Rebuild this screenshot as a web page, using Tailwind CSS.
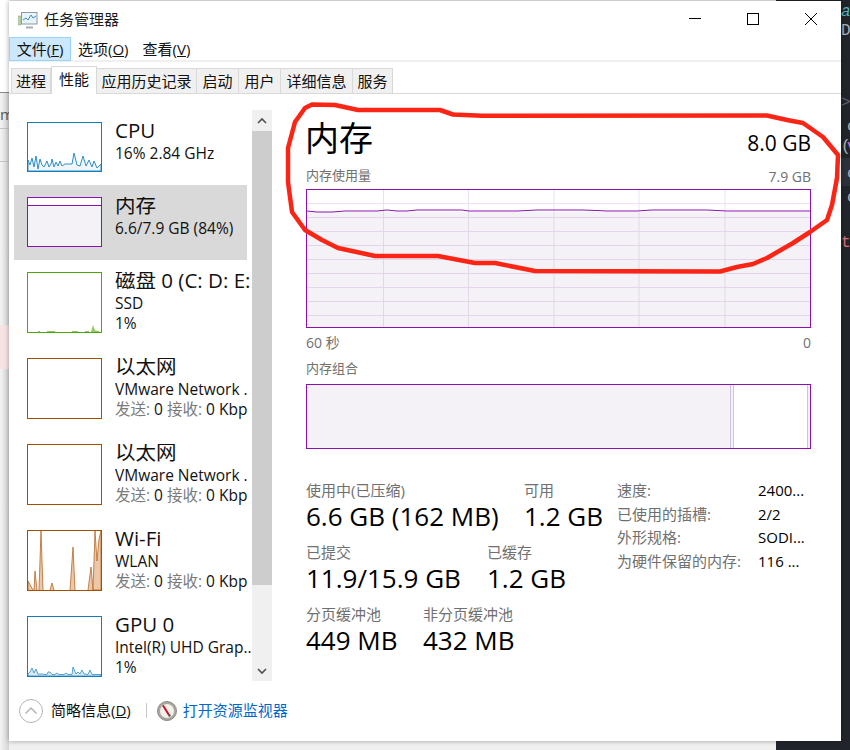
<!DOCTYPE html>
<html lang="zh-CN">
<head>
    <meta charset="UTF-8">
    <title>任务管理器</title>
    <script src="https://cdn.jsdelivr.net/npm/@tailwindcss/browser@4"></script>
</head>
<body class="font-['Open_Sans','Noto_Sans_CJK_SC',sans-serif]">
<div class="relative w-[850px] h-[750px] overflow-hidden bg-[#f0f0f0]">
    <!-- things behind the window -->
    <div class="absolute left-[776px] top-0 w-[74px] h-[750px] bg-[#21252b]"></div>
    <div class="absolute left-0 top-0 w-[9px] h-[750px] bg-gradient-to-r from-[#f4f4f4] to-[#d4d4d4]"></div>
    <div class="absolute left-0 top-0 w-[9px] h-[92px] bg-white"></div>
    <div class="absolute left-0 top-[92px] w-[9px] h-px bg-[#8a8a8a]"></div>
    <div class="absolute left-0 top-[128px] w-[9px] h-px bg-[#c4c4c4]"></div>
    <div class="absolute left-0 top-[161px] w-[9px] h-px bg-[#c4c4c4]"></div>
    <div class="absolute left-0 top-[325px] w-[9px] h-[44px] bg-[#f7e3e3]"></div>
    <div class="absolute left-0 top-[103px] text-[15px] text-[#555]">m</div>
    <div class="absolute left-[841px] top-0 w-[9px] h-[260px] overflow-hidden font-['Liberation_Mono'] text-[16px]">
        <div class="absolute left-0 top-0 italic text-[#56b6c2]">an</div>
        <div class="absolute left-0 top-[19px] text-[#abb2bf]">Do</div>
        <div class="absolute left-0 top-[91px] text-[#5c6370]">&gt;</div>
        <div class="absolute left-[6px] top-[115px] text-[#abb2bf]">c</div>
        <div class="absolute left-0 top-[135px] text-[#abb2bf]">(</div>
        <div class="absolute left-[6px] top-[135px] text-[#c678dd]">v</div>
        <div class="absolute left-0 top-[158px] w-[9px] h-[28px] bg-[#2c313a]"></div>
        <div class="absolute left-[6px] top-[162px] text-[#abb2bf]">c</div>
        <div class="absolute left-[6px] top-[186px] text-[#abb2bf]">c</div>
        <div class="absolute left-0 top-[231px] text-[#e06c75]">t:</div>
    </div>

    <!-- window -->
    <div class="absolute left-[9px] top-px w-[832px] h-[740px] flex flex-col bg-white shadow-[0_0_5px_rgba(0,0,0,0.35)]">
        <div class="h-[37px] flex items-center shrink-0">
            <svg class="ml-[9px] w-[20px] h-[18px]" viewBox="0 0 20 18">
                <rect x="0" y="5" width="3" height="9" fill="#b9d9a8" stroke="#8a9a8a" stroke-width="0.5"/>
                <rect x="3.5" y="1.5" width="15.5" height="11.5" fill="#e8f3fb" stroke="#8f9aa3"/>
                <path d="M5 9l3-2 2 2 3-5 2 3 3-2" fill="none" stroke="#3f8fc4" stroke-width="1"/>
                <path d="M8 16.5h7" stroke="#a6adb3" stroke-width="2"/>
            </svg>
            <span class="ml-[6px] text-[15px] text-[#1a1a1a]">任务管理器</span>
            <div class="ml-auto mr-px -mt-[2px] flex">
                <div class="w-[58px] flex justify-center">
                    <svg class="w-[12px] h-[12px]" viewBox="0 0 12 12"><path d="M0 5.5H12" stroke="#000" stroke-width="1"/></svg>
                </div>
                <div class="w-[58px] flex justify-center">
                    <svg class="w-[12px] h-[12px]" viewBox="0 0 12 12"><rect x="0.5" y="0.5" width="11" height="11" fill="none" stroke="#000"/></svg>
                </div>
                <div class="w-[58px] flex justify-center">
                    <svg class="w-[12px] h-[12px]" viewBox="0 0 12 12"><path d="M0 0L12 12M12 0L0 12" stroke="#000" stroke-width="1"/></svg>
                </div>
            </div>
        </div>
        <div class="h-[24px] flex items-center text-[15px] text-[#111] border-b-2 border-[#f0f0f0] shrink-0">
            <div class="w-[62px] h-[24px] flex items-center justify-center bg-[#cce8ff] border border-[#99d1ff]">文件(<u>F</u>)</div>
            <div class="ml-[7px]">选项(<u>O</u>)</div>
            <div class="ml-[14px]">查看(<u>V</u>)</div>
        </div>
        <div class="h-[32px] flex items-end pl-[2px] border-b border-[#d9d9d9] text-[15px] text-[#111] shrink-0">
            <div class="w-[40px] h-[25px] flex items-center justify-center bg-[#f0f0f0] border border-b-0 border-[#d9d9d9]">进程</div>
            <div class="w-[46px] h-[28px] -mb-px flex items-start pt-[1px] justify-center bg-white border border-b-0 border-[#d9d9d9] z-10">性能</div>
            <div class="w-[100px] h-[25px] flex items-center justify-center bg-[#f0f0f0] border border-l-0 border-b-0 border-[#d9d9d9]">应用历史记录</div>
            <div class="w-[42px] h-[25px] flex items-center justify-center bg-[#f0f0f0] border border-l-0 border-b-0 border-[#d9d9d9]">启动</div>
            <div class="w-[42px] h-[25px] flex items-center justify-center bg-[#f0f0f0] border border-l-0 border-b-0 border-[#d9d9d9]">用户</div>
            <div class="w-[72px] h-[25px] flex items-center justify-center bg-[#f0f0f0] border border-l-0 border-b-0 border-[#d9d9d9]">详细信息</div>
            <div class="w-[40px] h-[25px] flex items-center justify-center bg-[#f0f0f0] border border-l-0 border-b-0 border-[#d9d9d9]">服务</div>
        </div>

        <div class="flex-1 flex min-h-0">
            <!-- left list -->
            <div class="mt-[16px] ml-[5px] w-[238px] h-[571px] overflow-hidden shrink-0 text-[#111]">
                <div class="w-[233px] h-[75px] flex pt-[12px] pl-[13px] gap-[13px]">
                    <svg class="w-[75px] h-[50px] shrink-0 border border-[#117dbb]" viewBox="0 0 73 48">
                        <path d="M0 37L2 42L4 35L6 44L8 33L10 46L12 36L14 42L16 44L19 38L21 44L23 41L24 36L26 44L28 39L30 43L32 38L34 43L37 41H44L46 30L49 42L52 43L55 33L58 43L61 37L64 44L66 38L69 45L73 41V48H0Z" fill="#f1f6fa" stroke="#2f8fc8"/>
                    </svg>
                    <div class="w-[137px] shrink-0 overflow-hidden whitespace-nowrap">
                        <div class="text-[20.5px] leading-[26px] -mt-[5px]">CPU</div>
                        <div class="text-[15.5px] leading-[20px]">16% 2.84 GHz</div>
                    </div>
                </div>
                <div class="w-[233px] h-[75px] flex pt-[12px] pl-[13px] gap-[13px] bg-[#d9d9d9]">
                    <div class="w-[75px] h-[50px] shrink-0 border border-[#8b12ae] bg-white">
                        <div class="mt-[7px] h-[41px] bg-[#f4f2f6] border-t border-[#8b12ae]"></div>
                    </div>
                    <div class="w-[137px] shrink-0 overflow-hidden whitespace-nowrap">
                        <div class="text-[20.5px] leading-[26px] -mt-[5px]">内存</div>
                        <div class="text-[15.5px] leading-[20px]">6.6/7.9 GB (84%)</div>
                    </div>
                </div>
                <div class="w-[233px] h-[86px] flex pt-[12px] pl-[13px] gap-[13px]">
                    <svg class="w-[75px] h-[61px] shrink-0 border border-[#4da60c]" viewBox="0 0 73 59">
                        <path d="M10 59V58H12V59M19 59V58H27V59M44 59V58H50V59M57 59V58H61V59M63 59L65 52L67 57.5L71 58V59Z" fill="#8fc765"/>
                    </svg>
                    <div class="w-[137px] shrink-0 overflow-hidden whitespace-nowrap">
                        <div class="text-[20.5px] leading-[26px] -mt-[5px]">磁盘 0 (C: D: E:</div>
                        <div class="text-[15.5px] leading-[20px]">SSD</div>
                        <div class="text-[15.5px] leading-[20px]">1%</div>
                    </div>
                </div>
                <div class="w-[233px] h-[86px] flex pt-[12px] pl-[13px] gap-[13px]">
                    <div class="w-[75px] h-[61px] shrink-0 border border-[#a74f01]"></div>
                    <div class="w-[137px] shrink-0 overflow-hidden whitespace-nowrap">
                        <div class="text-[20.5px] leading-[26px] -mt-[5px]">以太网</div>
                        <div class="text-[15.5px] leading-[20px]">VMware Network .</div>
                        <div class="text-[15.5px] leading-[20px]"><span class="text-[#7a7a7a]">发送:</span> 0 <span class="text-[#7a7a7a]">接收:</span> 0 Kbp</div>
                    </div>
                </div>
                <div class="w-[233px] h-[86px] flex pt-[12px] pl-[13px] gap-[13px]">
                    <div class="w-[75px] h-[61px] shrink-0 border border-[#a74f01]"></div>
                    <div class="w-[137px] shrink-0 overflow-hidden whitespace-nowrap">
                        <div class="text-[20.5px] leading-[26px] -mt-[5px]">以太网</div>
                        <div class="text-[15.5px] leading-[20px]">VMware Network .</div>
                        <div class="text-[15.5px] leading-[20px]"><span class="text-[#7a7a7a]">发送:</span> 0 <span class="text-[#7a7a7a]">接收:</span> 0 Kbp</div>
                    </div>
                </div>
                <div class="w-[233px] h-[86px] flex pt-[12px] pl-[13px] gap-[13px]">
                    <svg class="w-[75px] h-[61px] shrink-0 border border-[#a74f01]" viewBox="0 0 73 59">
                        <path d="M0 59V50L5 59M6 59L7 40L9 59M11 59L13 0L15 59M22 59L24 52L26 59M42 59L45 16L47 59M60 59L63 36L65 59M65 59L67 0L69 30L71 8L73 0V59Z" fill="#edc8a8" stroke="#b5692a" stroke-width="0.8"/>
                    </svg>
                    <div class="w-[137px] shrink-0 overflow-hidden whitespace-nowrap">
                        <div class="text-[20.5px] leading-[26px] -mt-[5px]">Wi-Fi</div>
                        <div class="text-[15.5px] leading-[20px]">WLAN</div>
                        <div class="text-[15.5px] leading-[20px]"><span class="text-[#7a7a7a]">发送:</span> 0 <span class="text-[#7a7a7a]">接收:</span> 0 Kbp</div>
                    </div>
                </div>
                <div class="w-[233px] h-[86px] flex pt-[12px] pl-[13px] gap-[13px]">
                    <svg class="w-[75px] h-[61px] shrink-0 border border-[#117dbb]" viewBox="0 0 73 59">
                        <path d="M0 57L2 55L4 51L6 56L8 52L10 57H14L17 57.5H19L20 55H22L24 57.5H27L29 56L31 57.5H36L38 56L40 57.5H44L45 50L48 57L50 55L52 57L54 53L56 57L60 57.5L62 53L64 57.5H73V59H0Z" fill="#d8e9f4" stroke="#2f8fc8" stroke-width="0.8"/>
                    </svg>
                    <div class="w-[137px] shrink-0 overflow-hidden whitespace-nowrap">
                        <div class="text-[20.5px] leading-[26px] -mt-[5px]">GPU 0</div>
                        <div class="text-[15.5px] leading-[20px]">Intel(R) UHD Grap..</div>
                        <div class="text-[15.5px] leading-[20px]">1%</div>
                    </div>
                </div>
            </div>

            <!-- scrollbar -->
            <div class="mt-[16px] w-[20px] h-[571px] flex flex-col bg-[#f0f0f0] shrink-0">
                <div class="h-[21px] flex items-center justify-center">
                    <svg class="w-[10px] h-[7px]" viewBox="0 0 10 7"><path d="M1 6l4-4 4 4" fill="none" stroke="#505050" stroke-width="1.6"/></svg>
                </div>
                <div class="h-[454px] bg-[#cdcdcd]"></div>
                <div class="flex-1 flex items-end justify-center pb-[6px]">
                    <svg class="w-[10px] h-[7px]" viewBox="0 0 10 7"><path d="M1 1l4 4 4-4" fill="none" stroke="#505050" stroke-width="1.6"/></svg>
                </div>
            </div>

            <!-- main panel -->
            <div class="ml-[34px] w-[505px] shrink-0">
                <div class="mt-[24px] flex justify-between items-end text-black">
                    <div class="text-[34px] leading-[40px] -ml-px">内存</div>
                    <div class="text-[21px] leading-[28px] mb-px">8.0 GB</div>
                </div>
                <div class="mt-[9px] h-[18px] flex justify-between items-center text-[#707070]">
                    <div class="text-[13px]">内存使用量</div>
                    <div class="text-[14px]">7.9 GB</div>
                </div>
                <svg class="mt-[4px] w-[505px] h-[139px] block border border-[#8b12ae]" viewBox="0 0 503 137">
                    <rect x="0" y="22" width="503" height="115" fill="#f4f2f6"/>
                    <g stroke="#efdff5" stroke-width="1">
                        <path d="M0 13.5H503"/>
                        <path d="M76.5 0V22M161.5 0V22M247 0V22M332 0V22M418 0V22"/>
                    </g>
                    <g stroke="#e4d6ea" stroke-width="1">
                        <path d="M0 27.5H503M0 41.5H503M0 55.5H503M0 69.5H503M0 83.5H503M0 97.5H503M0 111.5H503M0 125.5H503"/>
                        <path d="M76.5 22V137M161.5 22V137M247 22V137M332 22V137M418 22V137"/>
                    </g>
                    <path d="M0 21L10 22L25 22L38 21H70L80 20L90 21H100L110 20H155L162 21H210L230 20H275L290 20.5L300 21H330L345 20H400L420 21H503" fill="none" stroke="#8b12ae" stroke-width="1"/>
                </svg>
                <div class="mt-[5px] h-[18px] flex justify-between items-center text-[14px] text-[#707070]">
                    <div>60 秒</div>
                    <div>0</div>
                </div>
                <div class="mt-[9px] h-[18px] flex items-center text-[13px] text-[#707070]">内存组合</div>
                <div class="mt-[6px] h-[65px] flex border border-[#8b12ae]">
                    <div class="w-[423px] bg-[#f4f2f6]"></div>
                    <div class="w-px bg-[#d5bfe0]"></div>
                    <div class="w-[2px] bg-[#f4f2f6]"></div>
                    <div class="w-px bg-[#d5bfe0]"></div>
                    <div class="w-[73px] bg-white"></div>
                    <div class="w-px bg-[#d5bfe0]"></div>
                    <div class="flex-1 bg-[#f4f2f6]"></div>
                </div>

                <div class="mt-[32px] flex">
                    <div class="w-[311px] shrink-0">
                        <div class="h-[62px] flex">
                            <div class="w-[218px] shrink-0">
                                <div class="h-[18px] leading-[18px] text-[15px] text-[#707070]">使用中(已压缩)</div>
                                <div class="leading-[34px] text-[26px] text-black whitespace-nowrap">6.6 GB (162 MB)</div>
                            </div>
                            <div>
                                <div class="h-[18px] leading-[18px] text-[15px] text-[#707070]">可用</div>
                                <div class="leading-[34px] text-[26px] text-black whitespace-nowrap">1.2 GB</div>
                            </div>
                        </div>
                        <div class="h-[62px] flex">
                            <div class="w-[181px] shrink-0">
                                <div class="h-[18px] leading-[18px] text-[15px] text-[#707070]">已提交</div>
                                <div class="leading-[34px] text-[26px] text-black whitespace-nowrap">11.9/15.9 GB</div>
                            </div>
                            <div>
                                <div class="h-[18px] leading-[18px] text-[15px] text-[#707070]">已缓存</div>
                                <div class="leading-[34px] text-[26px] text-black whitespace-nowrap">1.2 GB</div>
                            </div>
                        </div>
                        <div class="h-[62px] flex">
                            <div class="w-[117px] shrink-0">
                                <div class="h-[18px] leading-[18px] text-[15px] text-[#707070]">分页缓冲池</div>
                                <div class="leading-[34px] text-[26px] text-black whitespace-nowrap">449 MB</div>
                            </div>
                            <div>
                                <div class="h-[18px] leading-[18px] text-[15px] text-[#707070]">非分页缓冲池</div>
                                <div class="leading-[34px] text-[26px] text-black whitespace-nowrap">432 MB</div>
                            </div>
                        </div>
                    </div>
                    <div class="-mt-[2px] self-start grid grid-cols-[141px_1fr] auto-rows-[23.4px] items-center text-[15px] text-black whitespace-nowrap">
                        <div class="text-[#707070]">速度:</div><div>2400...</div>
                        <div class="text-[#707070]">已使用的插槽:</div><div>2/2</div>
                        <div class="text-[#707070]">外形规格:</div><div>SODI...</div>
                        <div class="text-[#707070]">为硬件保留的内存:</div><div>116 ...</div>
                    </div>
                </div>
            </div>
        </div>

        <!-- footer -->
        <div class="h-[60px] flex items-center pb-[1px] shrink-0 text-[15px]">
            <svg class="ml-[10px] w-[24px] h-[24px]" viewBox="0 0 24 24">
                <circle cx="12" cy="12" r="11.5" fill="#fff" stroke="#b5b5b5"/>
                <path d="M6.5 14.5L12 9l5.5 5.5" fill="none" stroke="#b5b5b5" stroke-width="1.5"/>
            </svg>
            <span class="ml-[8px] text-[#111]">简略信息(<u>D</u>)</span>
            <div class="ml-[15px] w-px h-[15px] bg-[#c8c8c8]"></div>
            <svg class="ml-[10px] w-[20px] h-[20px]" viewBox="0 0 20 20">
                <circle cx="10" cy="10" r="9.5" fill="#a8a8a0" stroke="#8c8c86"/>
                <circle cx="10" cy="10" r="7" fill="#f4f1e8"/>
                <path d="M6 4.5L12 14" stroke="#c8102e" stroke-width="2"/>
                <circle cx="12.5" cy="14.5" r="1.2" fill="#555"/>
            </svg>
            <span class="ml-[6px] text-[#0066cc]">打开资源监视器</span>
        </div>
    </div>

    <!-- hand drawn red mark over the screenshot -->
    <svg class="absolute left-0 top-0 w-[850px] h-[750px] pointer-events-none" viewBox="0 0 850 750">
        <path d="M312 104.5L335 105L358 110L440 110L453 114.5L482 115.7L767 115.5L787 120L803 123L823 137L838 155L837 178L832 205L827 220L810 232L793 243L767 258L753 264L737 267L720 271.5L535 271L495 263L475 263L438 256L375 256L338 248L322 240L305 230L292 212L288 182L288 148L295 122L305 108Z" fill="none" stroke="#fb2516" stroke-width="4.5" stroke-linejoin="round"/>
    </svg>
</div>
</body>
</html>
